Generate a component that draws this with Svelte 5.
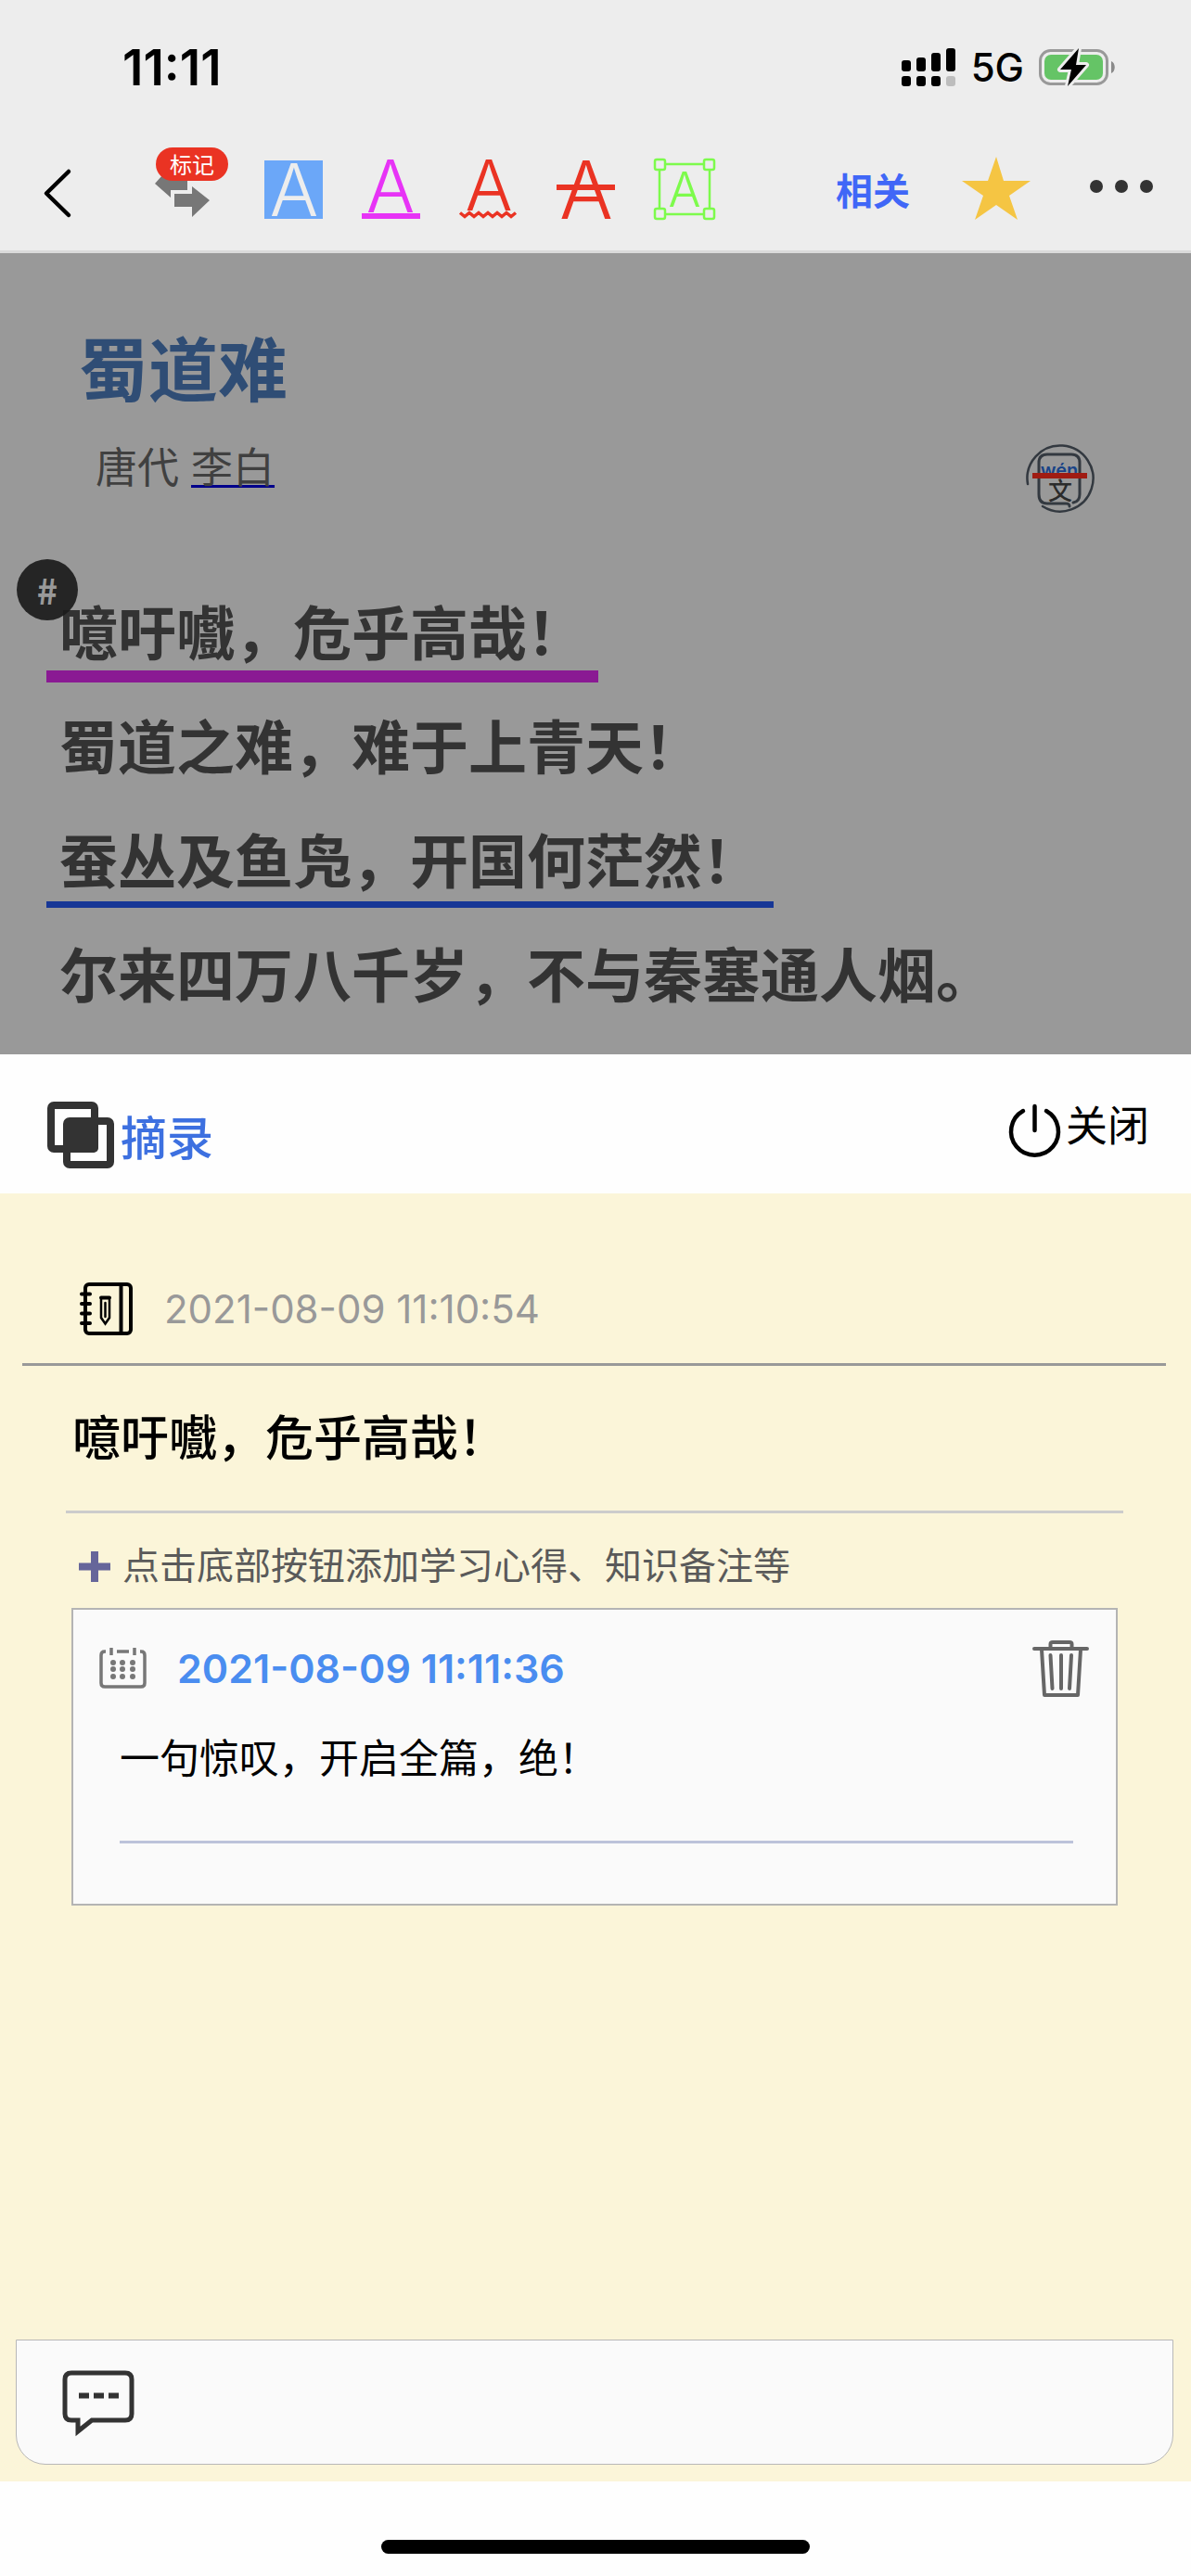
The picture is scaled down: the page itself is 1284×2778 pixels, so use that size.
<script lang="ts">
	type Verse = {
		text: string;
		mark?: 'purple' | 'blue';
	};

	const poem = {
		title: '蜀道难',
		dynasty: '唐代',
		author: '李白'
	};

	const verses: Verse[] = [
		{ text: '噫吁嚱，危乎高哉！', mark: 'purple' },
		{ text: '蜀道之难，难于上青天！' },
		{ text: '蚕丛及鱼凫，开国何茫然！', mark: 'blue' },
		{ text: '尔来四万八千岁，不与秦塞通人烟。' }
	];

	const excerpt = {
		time: '2021-08-09 11:10:54',
		quote: '噫吁嚱，危乎高哉！'
	};

	let notes = $state([{ id: 1, time: '2021-08-09 11:11:36', text: '一句惊叹，开启全篇，绝！' }]);

	const calendarRows = [17, 24, 32];
	const calendarCols = [15, 25, 36];

	function removeNote(id: number) {
		notes = notes.filter((note) => note.id !== id);
	}
</script>

<div class="screen">
	<div class="status-bar">
		<span class="clock">11:11</span>
		<div class="status-right">
			<svg class="signal" width="59" height="42" viewBox="0 0 59 42" aria-hidden="true">
				<rect x="0" y="13" width="10" height="12" rx="3" />
				<rect x="16" y="10" width="10" height="15" rx="3" />
				<rect x="32" y="5" width="10" height="20" rx="3" />
				<rect x="48" y="0" width="10" height="25" rx="3" />
				<rect x="0" y="30" width="10" height="11" rx="3" />
				<rect x="16" y="30" width="10" height="11" rx="3" />
				<rect x="32" y="30" width="10" height="11" rx="3" />
				<rect x="48" y="30" width="10" height="11" rx="3" fill="#bdbdbd" />
			</svg>
			<span class="network">5G</span>
			<svg width="83" height="42" viewBox="0 0 83 42" aria-hidden="true">
				<rect x="1.5" y="2.5" width="72" height="36" rx="11" fill="none" stroke="#999" stroke-width="3" />
				<path d="M78 14c5 2 5 11 0 13z" fill="#8a8a8a" />
				<rect x="6" y="7" width="63" height="27" rx="7" fill="#65c466" />
				<path
					d="M43 0 23 23H35L31 41 51 18H40Z"
					fill="#000"
					stroke="#ededed"
					stroke-width="6"
					stroke-linejoin="round"
					paint-order="stroke"
				/>
			</svg>
		</div>
	</div>

	<nav class="toolbar">
		<button type="button" class="back" aria-label="返回">
			<svg width="30" height="66" viewBox="0 0 30 66">
				<path d="M27 14 3 37.5 27 61" fill="none" stroke="#000" stroke-width="4.5" stroke-linecap="round" stroke-linejoin="round" />
			</svg>
		</button>
		<button type="button" class="swap">
			<svg width="80" height="66" viewBox="0 0 80 66" fill="#777" aria-hidden="true">
				<path d="M1 27 18 8V16H36V34H18V42Z" />
				<path d="M22 38H41V30L60 45 41 63V52H22Z" />
			</svg>
			<span class="badge">标记</span>
		</button>
		<div class="tools">
			<button type="button" aria-label="高亮">
				<svg width="63" height="66" viewBox="0 0 63 66">
					<rect y="2" width="63" height="63" fill="#6ba7f8" />
					<text x="32" y="62" font-size="78" fill="#ededed">A</text>
				</svg>
			</button>
			<button type="button" aria-label="下划线">
				<svg width="63" height="66" viewBox="0 0 63 66" fill="#e733f6">
					<text x="31" y="58" font-size="78">A</text>
					<rect y="59" width="63" height="6" />
				</svg>
			</button>
			<button type="button" aria-label="波浪线">
				<svg width="63" height="66" viewBox="0 0 63 66" fill="#ea3323">
					<text x="32" y="56" font-size="76">A</text>
					<path d="M1 58.500l5 4 5-4 5 4 5-4 5 4 5-4 5 4 5-4 5 4 5-4 5 4 5-4" fill="none" stroke="#ea3323" stroke-width="3.500" />
				</svg>
			</button>
			<button type="button" aria-label="删除线">
				<svg width="63" height="66" viewBox="0 0 63 66" fill="#ea3323">
					<text x="32" y="65" font-size="86">A</text>
					<rect y="28" width="63" height="6" />
				</svg>
			</button>
			<button type="button" aria-label="框选">
				<svg width="66" height="66" viewBox="0 0 66 66" fill="#7dfb4c">
					<g fill="none" stroke="#7dfb4c" stroke-width="2.500">
						<path d="M13 6H53M13 60H53M6 13V53M60 13V53" />
						<rect x="1" y="1" width="11" height="11" rx="2" />
						<rect x="54" y="1" width="11" height="11" rx="2" />
						<rect x="1" y="54" width="11" height="11" rx="2" />
						<rect x="54" y="54" width="11" height="11" rx="2" />
					</g>
					<text x="33" y="52" font-size="52">A</text>
				</svg>
			</button>
		</div>
		<div class="actions">
			<button type="button" class="related">相关</button>
			<button type="button" class="star" aria-label="收藏">
				<svg width="74" height="70" viewBox="0 0 74 70">
					<path d="M37 0 45 26H74L51 42 60 68 37 52 14 68 23 42 0 26H28Z" fill="#f5c543" />
				</svg>
			</button>
			<button type="button" class="more" aria-label="更多">
				<svg width="68" height="66" viewBox="0 0 68 66" fill="#333">
					<circle cx="7" cy="30" r="7" />
					<circle cx="34" cy="30" r="7" />
					<circle cx="61" cy="30" r="7" />
				</svg>
			</button>
		</div>
	</nav>

	<main class="reader">
		<header class="poem-head">
			<div>
				<h1>{poem.title}</h1>
				<p class="byline">
					<span>{poem.dynasty}</span>
					<a href="#author">{poem.author}</a>
				</p>
			</div>
			<button type="button" class="pinyin" aria-label="拼音">
				<svg width="74" height="74" viewBox="0 0 74 74" fill="none" stroke="#333940" stroke-linecap="round">
					<path d="M2 43A35.500 35.500 0 1 1 18 67" stroke-width="2.500" />
					<path d="M47 67C47 64 45 64 43 64H23Q14 64 14 54V20Q14 11 23 11H49Q58 11 58 20V54Q58 62 51 63" stroke-width="3" />
					<text x="36" y="35" font-size="20" fill="#1a4487" stroke="none">wén</text>
					<text class="han" x="37" y="60" font-size="26" fill="#2b2b2b" stroke="none">文</text>
					<path d="M7 34H66" stroke="#a01c13" stroke-width="6" stroke-linecap="butt" />
				</svg>
			</button>
		</header>
		<ol class="verses">
			{#each verses as verse}
				<li><span class={verse.mark}>{verse.text}</span></li>
			{/each}
			<li class="anchor" aria-hidden="true">#</li>
		</ol>
	</main>

	<header class="sheet-head">
		<h2>
			<svg width="72" height="72" viewBox="0 0 72 72" aria-hidden="true">
				<g fill="none" stroke="#333" stroke-width="8">
					<rect x="4" y="4" width="47" height="47" rx="3" />
					<rect x="21" y="21" width="47" height="47" rx="3" />
				</g>
				<rect x="18" y="18" width="37" height="37" rx="5" fill="#333" />
			</svg>
			摘录
		</h2>
		<button type="button" class="close">
			<svg width="57" height="58" viewBox="0 0 57 58" fill="none" stroke="#000" stroke-width="4.500" stroke-linecap="round" aria-hidden="true">
				<path d="M16 7A25.500 25.500 0 1 0 41 7M28.500 2V28" />
			</svg>
			关闭
		</button>
	</header>

	<section class="notes">
		<div class="meta">
			<svg width="57" height="57" viewBox="0 0 57 57" fill="none" stroke="#000" stroke-width="4" stroke-linecap="round" aria-hidden="true">
				<rect x="6" y="2" width="49" height="53" rx="4" />
				<path d="M44.500 2V55" stroke-width="4" />
				<path d="M2 12.500H11M2 23H11M2 33.500H11M2 44H11" stroke-width="4" />
				<path d="M23 18.500V38L27.500 44.500 32 38V18.500M27.500 22V37" stroke-width="2.500" />
				<path d="M23 16.500H32" stroke-width="4" />
			</svg>
			<time>{excerpt.time}</time>
		</div>
		<blockquote>{excerpt.quote}</blockquote>
		<p class="tip">
			<svg width="34" height="42" viewBox="0 0 34 42" aria-hidden="true">
				<path d="M17 8V41M0 24.500H34" stroke="#66669a" stroke-width="8" />
			</svg>
			点击底部按钮添加学习心得、知识备注等
		</p>

		{#each notes as note (note.id)}
			<article class="note">
				<div class="note-head">
					<svg width="51" height="46" viewBox="0 0 51 46" aria-hidden="true">
						<path
							d="M7 5H6Q2 5 2 9V39Q2 43 6 43H45Q49 43 49 39V9Q49 5 45 5H44M13 1V9M38 1V9M19 5H32"
							fill="none"
							stroke="#777"
							stroke-width="3.500"
						/>
						{#each calendarRows as cy}
							{#each calendarCols as cx}
								<circle {cx} {cy} r="3" fill="#777" />
							{/each}
						{/each}
					</svg>
					<time>{note.time}</time>
					<button type="button" class="remove" aria-label="删除" onclick={() => removeNote(note.id)}>
						<svg width="61" height="62" viewBox="0 0 61 62" fill="none" stroke="#666" stroke-width="4" stroke-linecap="round" stroke-linejoin="round">
							<path d="M2 10H59M19.500 9V5Q19.500 3 22 3H40Q42.500 3 42.500 5V9" />
							<path d="M10 11 13 60H49L52 11M19.500 17 21.500 53M31 17V53M42 17 40 53" />
						</svg>
					</button>
				</div>
				<p class="note-text">{note.text}</p>
			</article>
		{/each}

		<button type="button" class="composer" aria-label="添加笔记">
			<svg width="78" height="70" viewBox="0 0 78 70" aria-hidden="true">
				<path d="M10 3H68Q75 3 75 10V47Q75 54 68 54H32L17 66V54H10Q3 54 3 47V10Q3 3 10 3Z" fill="none" stroke="#333" stroke-width="5" />
				<path d="M18 27.500H29M34 27.500H45M50 27.500H61" stroke="#333" stroke-width="6" />
			</svg>
		</button>
	</section>

	<div class="safe-area"><div class="home-indicator"></div></div>
</div>

<style>
	:global(body) {
		margin: 0;
	}

	.screen {
		display: flex;
		flex-direction: column;
		min-height: 100vh;
		background: #fefefe;
		color: #000;
		font-family: 'Noto Sans CJK SC', 'Noto Sans', sans-serif;
	}

	h1,
	h2,
	p,
	ol,
	blockquote {
		margin: 0;
		padding: 0;
	}

	button {
		display: flex;
		flex: none;
		padding: 0;
		border: 0;
		background: none;
		color: inherit;
		font: inherit;
		cursor: pointer;
	}

	svg {
		display: block;
		flex: none;
		overflow: visible;
	}

	svg text {
		font-family: Inter, sans-serif;
		font-weight: 300;
		text-anchor: middle;
	}

	time,
	.clock,
	.network {
		font-family: Inter, sans-serif;
	}

	.status-bar {
		display: flex;
		align-items: center;
		justify-content: space-between;
		padding: 43px 81px 43px 132px;
		background: #ededed;
		line-height: 60px;
	}

	.clock {
		font-size: 53px;
		font-weight: 600;
	}

	.status-right {
		display: flex;
		align-items: center;
		gap: 16px;
	}

	.network {
		font-size: 42px;
		font-weight: 500;
	}

	.toolbar {
		display: flex;
		align-items: center;
		padding: 25px 41px 33px 47px;
		border-bottom: 3px solid #dadada;
		background: #ededed;
	}

	.toolbar button {
		align-items: center;
		height: 66px;
	}

	.swap {
		position: relative;
		margin: 0 39px 0 89px;
	}

	.badge {
		position: absolute;
		top: -12px;
		right: 0;
		left: 2px;
		border-radius: 18px;
		background: #ea3323;
		color: #fff;
		font-size: 24px;
		line-height: 36px;
		text-align: center;
	}

	.tools {
		display: flex;
		gap: 42px;
	}

	.actions {
		display: flex;
		margin-left: auto;
	}

	.related {
		color: #4067f7;
		font-size: 40px;
		font-weight: 700;
	}

	.star {
		margin: 0 64px 0 56px;
	}

	.reader {
		padding: 72px 0 28px;
		background: #999;
		color: #333;
	}

	.poem-head {
		display: flex;
		align-items: flex-end;
		justify-content: space-between;
		padding: 0 104px 64px 85px;
	}

	h1 {
		margin-bottom: 27px;
		color: #2f4d75;
		font-size: 75px;
		font-weight: 700;
		line-height: 100px;
	}

	.byline {
		display: flex;
		gap: 13px;
		padding: 0 0 21px 18px;
		color: #404040;
		font-size: 45px;
		line-height: 60px;
	}

	.byline a {
		color: inherit;
		text-decoration: underline #00008b 3px;
		text-underline-offset: 2px;
	}

	.pinyin text {
		font-weight: 600;
	}

	.pinyin text.han {
		font-family: 'Noto Sans CJK SC', sans-serif;
		font-weight: 500;
	}

	.verses {
		position: relative;
		list-style: none;
		color: #333;
		font-size: 63px;
		font-weight: 700;
		line-height: 89px;
	}

	.verses li:not(.anchor) {
		display: flex;
		align-items: flex-start;
		min-height: 106px;
		padding: 17px 50px 0;
	}

	.verses span {
		padding: 0 14px;
	}

	.verses .purple {
		border-bottom: 13px solid #8a1a93;
	}

	.verses .blue {
		padding-bottom: 3px;
		border-bottom: 7px solid #173796;
	}

	.verses .anchor {
		position: absolute;
		top: -14px;
		left: 18px;
		width: 66px;
		border-radius: 50%;
		background: rgba(28, 28, 28, 0.93);
		color: #999;
		font-size: 38px;
		line-height: 66px;
		text-align: center;
	}

	.sheet-head {
		display: flex;
		align-items: flex-start;
		justify-content: space-between;
		padding: 51px 45px 27px 51px;
	}

	h2 {
		display: flex;
		align-items: center;
		gap: 7px;
		color: #3d70e0;
		font-size: 50px;
		font-weight: 500;
		line-height: 72px;
	}

	.close {
		gap: 5px;
		font-size: 45px;
		line-height: 48px;
	}

	.close svg {
		margin-top: 3px;
	}

	.notes {
		display: flex;
		flex: 1;
		flex-direction: column;
		background: #fbf5d9;
	}

	.meta {
		display: flex;
		align-items: center;
		gap: 34px;
		margin: 0 27px 0 24px;
		padding: 96px 0 30px 62px;
		border-bottom: 3px solid #999;
		color: #999;
		font-size: 42px;
		line-height: 57px;
	}

	blockquote {
		margin: 0 73px 0 71px;
		padding: 45px 0 51px 7px;
		border-bottom: 3px solid #ccc;
		font-size: 52px;
		font-weight: 500;
		line-height: 60px;
	}

	.tip {
		display: flex;
		align-items: center;
		gap: 13px;
		padding: 24px 85px 18px;
		color: #5a5a5a;
		font-size: 40px;
		line-height: 60px;
	}

	.note {
		margin: 0 79px 24px 77px;
		padding: 32px 29px 65px 28px;
		border: 2px solid #b4b4b4;
		background: #fafafa;
	}

	.note-head {
		display: flex;
		align-items: center;
		gap: 33px;
		margin-bottom: 33px;
		color: #4a8df0;
		font-size: 43px;
		font-weight: 600;
		line-height: 62px;
	}

	.remove {
		margin-left: auto;
	}

	.note-text {
		margin: 0 17px 0 22px;
		padding-bottom: 62px;
		border-bottom: 3px solid #bcc3da;
		font-size: 43px;
		line-height: 60px;
	}

	.composer {
		margin: auto 19px 18px 17px;
		padding: 32px 49px 31px;
		border: 1px solid #b8b8b8;
		border-radius: 0 0 32px 32px;
		background: #fafafa;
	}

	.safe-area {
		padding: 63px 0 24px;
	}

	.home-indicator {
		width: 36%;
		height: 15px;
		margin: 0 auto;
		border-radius: 8px;
		background: #000;
	}
</style>
